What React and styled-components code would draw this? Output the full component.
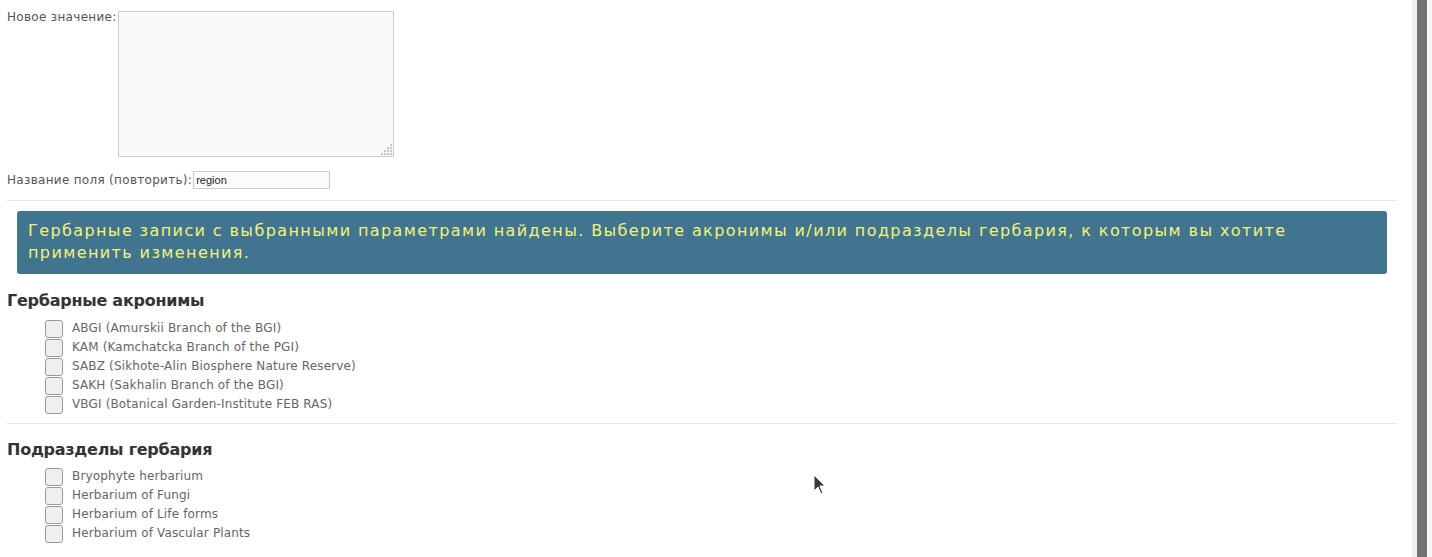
import React from "react";
import styled, { createGlobalStyle } from "styled-components";

const Global = createGlobalStyle`
  html, body { margin: 0; padding: 0; background: #ffffff; }
  body { font-family: "DejaVu Sans", Verdana, sans-serif; overflow: hidden; }
`;

const Page = styled.div`
  display: flex;
  height: 557px;
  width: 1432px;
  position: relative;
`;

const Main = styled.div`
  flex: 1;
  padding: 0 15px 0 7px;
  min-width: 0;
`;

const ScrollTrack = styled.div`
  width: 20px;
  background: linear-gradient(to right, #eeeff1 0 15px, #f6f6f7 15px);
  display: flex;
  padding-left: 5px;
  box-sizing: border-box;
`;

const ScrollThumb = styled.div`
  width: 10px;
  background: #6f7375;
  height: 100%;
`;

const FieldRow = styled.div`
  display: flex;
  align-items: ${(p) => (p.$top ? "flex-start" : "center")};
  margin-top: ${(p) => p.$mt}px;
`;

const Label = styled.label`
  font-size: 12px;
  letter-spacing: 0.3px;
  color: #555;
  line-height: 14px;
  margin-top: ${(p) => (p.$top ? "-1px" : "0")};
`;

const AreaWrap = styled.div`
  position: relative;
  margin-left: 1px;
`;

const TextArea = styled.textarea`
  display: block;
  width: 276px;
  height: 146px;
  box-sizing: border-box;
  border: 1px solid #cccccc;
  background: #fafafa;
  margin: 0;
  padding: 2px;
  resize: none;
  outline: none;
`;

const Grip = styled.svg`
  position: absolute;
  right: 1px;
  bottom: 1px;
  pointer-events: none;
`;

const TextInput = styled.input`
  width: 137px;
  height: 18px;
  box-sizing: border-box;
  border: 1px solid #cccccc;
  background: #fcfcfc;
  margin: 0 0 0 1px;
  padding: 0 2px;
  font-family: "Liberation Sans", Arial, sans-serif;
  font-size: 11px;
  color: #222;
  outline: none;
`;

const Rule = styled.hr`
  border: 0;
  border-top: 1px solid #e8e8e8;
  margin: ${(p) => p.$mt}px 0 0 0;
  height: 0;
`;

const Alert = styled.div`
  margin: 10px 10px 0 10px;
  background: #41758f;
  border-radius: 3px;
  padding: 9px 35px 10px 11px;
  color: #f4f27a;
  font-size: 16px;
  line-height: 22px;
  letter-spacing: 1.4px;
`;

const Heading = styled.h4`
  margin: ${(p) => p.$mt}px 0 0 0;
  font-size: 16px;
  font-weight: 600;
  letter-spacing: -0.25px;
  color: #333;
  line-height: 20px;
`;

const List = styled.div`
  margin-top: ${(p) => p.$mt}px;
  padding-left: 38px;
  display: flex;
  flex-direction: column;
`;

const Item = styled.label`
  display: flex;
  align-items: center;
  height: 19px;
  font-size: 12px;
  letter-spacing: 0.15px;
  color: #666;
`;

const Box = styled.span`
  width: 18px;
  height: 18px;
  box-sizing: border-box;
  border: 1px solid #9a9a9a;
  border-radius: 3px;
  background: #efefef;
  margin-right: 9px;
  margin-top: 3px;
`;

const Cursor = styled.svg`
  position: absolute;
  left: 813px;
  top: 474px;
`;

const acronyms = [
  "ABGI (Amurskii Branch of the BGI)",
  "KAM (Kamchatcka Branch of the PGI)",
  "SABZ (Sikhote-Alin Biosphere Nature Reserve)",
  "SAKH (Sakhalin Branch of the BGI)",
  "VBGI (Botanical Garden-Institute FEB RAS)",
];

const divisions = [
  "Bryophyte herbarium",
  "Herbarium of Fungi",
  "Herbarium of Life forms",
  "Herbarium of Vascular Plants",
];

const gripDots = [
  [9, 0], [6, 3], [9, 3], [3, 6], [6, 6], [9, 6], [0, 9], [3, 9], [6, 9], [9, 9],
];

export default function App() {
  return (
    <>
      <Global />
      <Page>
        <Main>
          <FieldRow $top $mt={11}>
            <Label $top>Новое значение:</Label>
            <AreaWrap>
              <TextArea />
              <Grip width="12" height="12" viewBox="0 0 12 12">
                {gripDots.map(([x, y]) => (
                  <rect key={`${x}-${y}`} x={x} y={y} width="2" height="2" fill="#c4c4c4" />
                ))}
              </Grip>
            </AreaWrap>
          </FieldRow>
          <FieldRow $mt={14}>
            <Label>Название поля (повторить):</Label>
            <TextInput defaultValue="region" />
          </FieldRow>
          <Rule $mt={11} />
          <Alert>
            Гербарные записи с выбранными параметрами найдены. Выберите акронимы и/или подразделы гербария, к которым вы хотите применить изменения.
          </Alert>
          <Heading $mt={17}>Гербарные акронимы</Heading>
          <List $mt={7}>
            {acronyms.map((a) => (
              <Item key={a}>
                <Box />
                {a}
              </Item>
            ))}
          </List>
          <Rule $mt={10} />
          <Heading $mt={16}>Подразделы гербария</Heading>
          <List $mt={6}>
            {divisions.map((a) => (
              <Item key={a}>
                <Box />
                {a}
              </Item>
            ))}
          </List>
        </Main>
        <ScrollTrack>
          <ScrollThumb />
        </ScrollTrack>
        <Cursor width="14" height="22" viewBox="0 0 14 22">
          <path d="M1 1 L1 17 L5 13 L8 20 L10 19 L7 12 L12 12 Z" fill="#3a3a3a" stroke="#fff" strokeWidth="1" />
        </Cursor>
      </Page>
    </>
  );
}
